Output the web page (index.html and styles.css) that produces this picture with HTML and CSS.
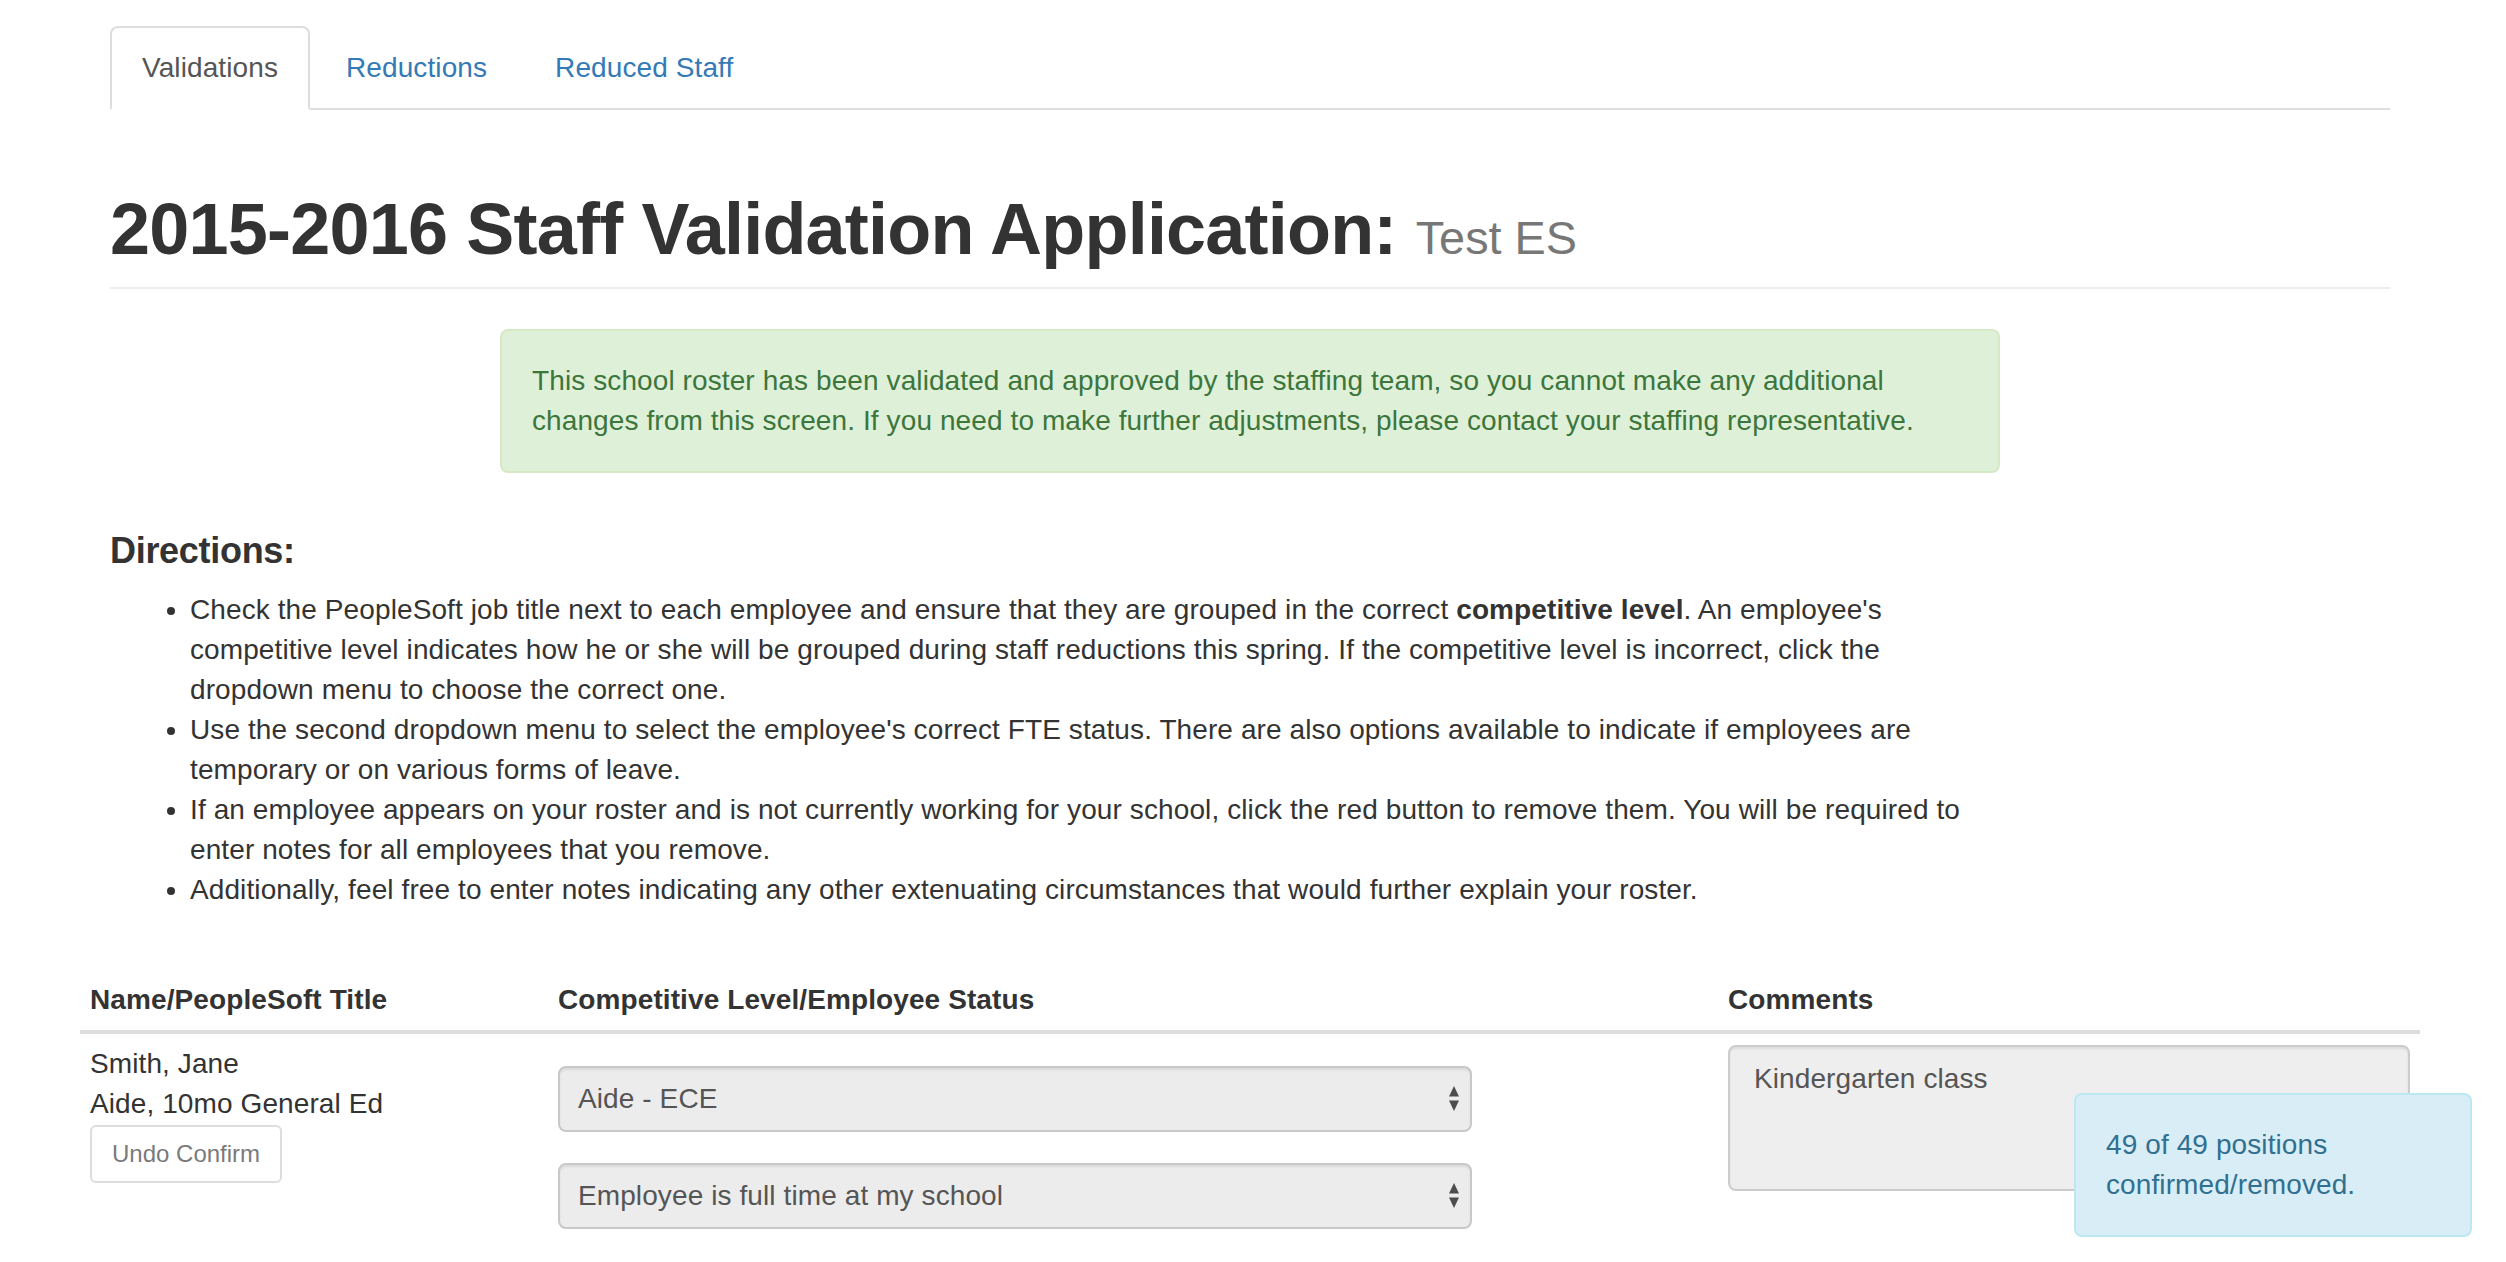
FILE: index.html
```html
<!DOCTYPE html>
<html lang="en">
<head>
<meta charset="utf-8">
<title>2015-2016 Staff Validation Application</title>
<link rel="stylesheet" href="styles.css">
</head>
<body>
<div class="page">
  <ul class="tabs">
    <li class="tab active"><a href="#">Validations</a></li>
    <li class="tab"><a href="#">Reductions</a></li>
    <li class="tab"><a href="#">Reduced Staff</a></li>
  </ul>

  <h1 class="page-header">2015-2016 Staff Validation Application: <small>Test ES</small></h1>

  <div class="alert-success">This school roster has been validated and approved by the staffing team, so you cannot make any additional changes from this screen. If you need to make further adjustments, please contact your staffing representative.</div>

  <div class="directions">
    <h4>Directions:</h4>
    <ul>
      <li>Check the PeopleSoft job title next to each employee and ensure that they are grouped in the correct <strong>competitive level</strong>. An employee's competitive level indicates how he or she will be grouped during staff reductions this spring. If the competitive level is incorrect, click the dropdown menu to choose the correct one.</li>
      <li>Use the second dropdown menu to select the employee's correct FTE status. There are also options available to indicate if employees are temporary or on various forms of leave.</li>
      <li>If an employee appears on your roster and is not currently working for your school, click the red button to remove them. You will be required to enter notes for all employees that you remove.</li>
      <li>Additionally, feel free to enter notes indicating any other extenuating circumstances that would further explain your roster.</li>
    </ul>
  </div>

  <table class="roster">
    <thead>
      <tr>
        <th class="c-name">Name/PeopleSoft Title</th>
        <th class="c-level">Competitive Level/Employee Status</th>
        <th class="c-comments">Comments</th>
      </tr>
    </thead>
    <tbody>
      <tr>
        <td>
          <div class="emp">Smith, Jane</div>
          <div class="emp">Aide, 10mo General Ed</div>
          <button class="btn-undo" disabled>Undo Confirm</button>
        </td>
        <td>
          <div class="fake-select first">
            <span>Aide - ECE</span>
            <svg class="arrows" width="12" height="27" viewBox="0 0 12 27"><polygon points="6,1 11,11.5 1,11.5" fill="#4d4d4d"/><polygon points="1,15.5 11,15.5 6,26" fill="#4d4d4d"/></svg>
          </div>
          <div class="fake-select second">
            <span>Employee is full time at my school</span>
            <svg class="arrows" width="12" height="27" viewBox="0 0 12 27"><polygon points="6,1 11,11.5 1,11.5" fill="#4d4d4d"/><polygon points="1,15.5 11,15.5 6,26" fill="#4d4d4d"/></svg>
          </div>
        </td>
        <td>
          <div class="comment-box">Kindergarten class</div>
        </td>
      </tr>
    </tbody>
  </table>
</div>

<div class="progress-note">49 of 49 positions confirmed/removed.</div>
</body>
</html>
```

FILE: styles.css
```css
* { box-sizing: border-box; }

html, body {
  margin: 0;
  padding: 0;
  background: #fff;
}

body {
  font-family: "Liberation Sans", Arial, Helvetica, sans-serif;
  font-size: 28px;
  line-height: 40px;
  letter-spacing: 0.1px;
  color: #333;
}

.page {
  width: 2280px;
  margin-left: 110px;
  padding-top: 26px;
}

/* Tabs */
.tabs {
  list-style: none;
  margin: 0;
  padding: 0;
  display: flex;
  border-bottom: 2px solid #ddd;
}

.tab {
  margin-bottom: -2px;
}

.tab a {
  display: block;
  padding: 20px 30px;
  margin-right: 4px;
  line-height: 40px;
  border: 2px solid transparent;
  border-radius: 8px 8px 0 0;
  color: #337ab7;
  text-decoration: none;
}

.tab.active a {
  color: #555;
  background: #fff;
  border-color: #ddd;
  border-bottom-color: transparent;
}

/* Header */
.page-header {
  margin: 80px 0 40px;
  padding-bottom: 18px;
  border-bottom: 2px solid #eee;
  font-size: 72px;
  line-height: 79.2px;
  font-weight: 700;
  letter-spacing: -0.8px;
  color: #333;
}

.page-header small {
  font-size: 46.8px;
  line-height: 1;
  font-weight: 400;
  letter-spacing: 0;
  color: #777;
}

/* Alert */
.alert-success {
  width: 1500px;
  margin: 0 0 0 390px;
  padding: 30px;
  border: 2px solid #d6e9c6;
  border-radius: 8px;
  background: #dff0d8;
  color: #3c763d;
}

/* Directions */
.directions {
  width: 1870px;
}

.directions h4 {
  margin: 58px 0 19px;
  font-size: 36px;
  line-height: 39.6px;
  font-weight: 700;
  letter-spacing: -0.3px;
  color: #333;
}

.directions ul {
  margin: 0;
  padding-left: 80px;
}

/* Table */
.roster {
  width: 2340px;
  margin: 60px -30px 0;
  border-collapse: collapse;
  border-spacing: 0;
}

.roster th {
  text-align: left;
  vertical-align: bottom;
  padding: 10px;
  border-bottom: 4px solid #ddd;
  font-weight: 700;
  line-height: 40px;
}

.c-name { width: 20%; }
.c-level { width: 50%; }
.c-comments { width: 30%; }

.roster td {
  vertical-align: top;
  padding: 10px;
}

.emp {
  line-height: 40px;
}

.btn-undo {
  display: block;
  margin-top: 1px;
  height: 58px;
  padding: 0 20px;
  font-family: "Liberation Sans", Arial, Helvetica, sans-serif;
  font-size: 24px;
  line-height: 36px;
  color: #333;
  background: #fff;
  border: 2px solid #ccc;
  border-radius: 6px;
  opacity: 0.65;
}

.fake-select {
  display: flex;
  align-items: center;
  justify-content: space-between;
  width: 914px;
  height: 66px;
  padding: 0 10px 0 18px;
  background: #ececec;
  border: 2px solid #c8c8c8;
  border-radius: 8px;
  box-shadow: inset 0 2px 2px rgba(0, 0, 0, 0.075);
  color: #555;
}

.fake-select.first {
  margin-top: 22px;
}

.fake-select.second {
  margin-top: 31px;
}

.arrows {
  display: block;
  flex: none;
}

.comment-box {
  width: 100%;
  height: 146px;
  margin-top: 1px;
  padding: 12px 24px;
  background: #eee;
  border: 2px solid #ccc;
  border-radius: 8px;
  box-shadow: inset 0 2px 2px rgba(0, 0, 0, 0.075);
  color: #555;
  line-height: 40px;
}

/* Fixed progress note */
.progress-note {
  position: fixed;
  right: 34px;
  bottom: 25px;
  width: 398px;
  padding: 30px;
  background: #d9edf7;
  border: 2px solid #bce8f1;
  border-radius: 8px;
  color: #31708f;
}
```
